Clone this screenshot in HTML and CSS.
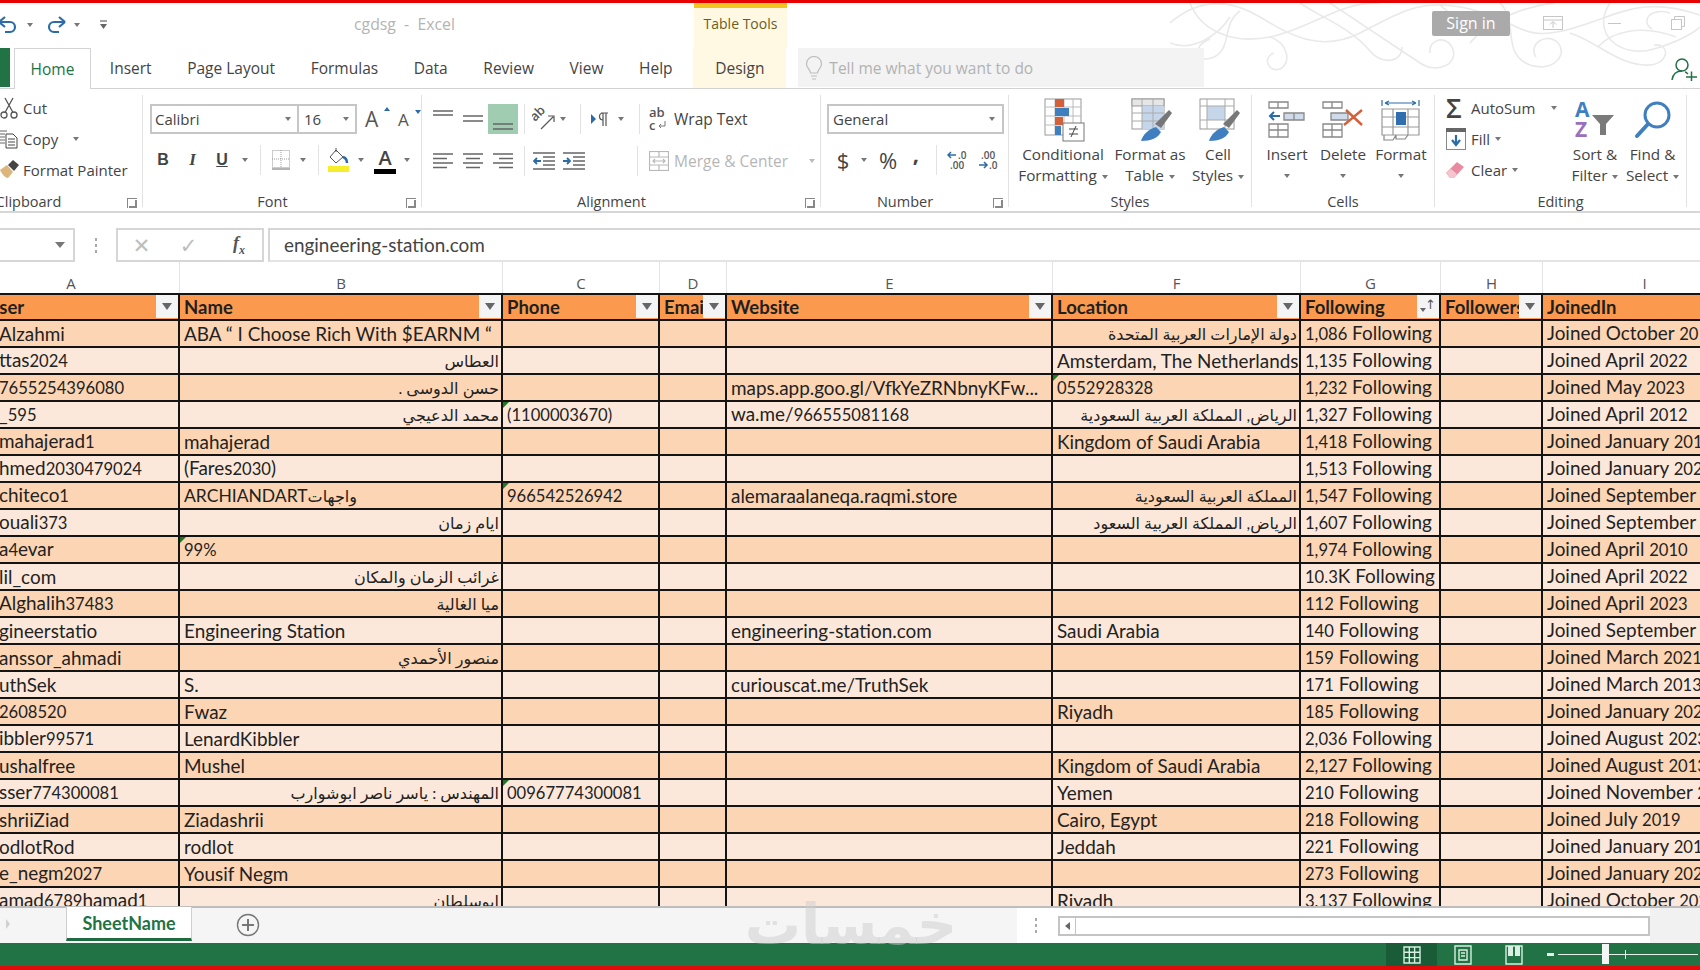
FILE: index.html
```html
<!DOCTYPE html>
<html lang="en">
<head>
<meta charset="utf-8">
<title>cgdsg - Excel</title>
<link rel="stylesheet" href="styles.css">
</head>
<body>
<div class="app">
  <div class="red-top"></div>

  <header class="titlebar">
    <svg class="swirl" width="530" height="72" viewBox="0 0 530 72" fill="none" stroke="#e9e9e9" stroke-width="1.6">
      <path d="M0 20C30 -6 60 -4 90 14S150 50 190 30S250 -6 300 6S350 40 400 26S470 -8 530 12"/>
      <path d="M20 0C30 26 60 42 100 34S170 -2 210 0M160 0C190 20 220 40 250 60C268 72 290 60 282 44C276 32 258 36 260 50"/>
      <path d="M40 36C20 44 26 62 44 54S52 20 70 8M330 0C350 20 330 50 360 62C384 70 400 50 386 38C374 30 358 42 366 54"/>
      <path d="M440 0C420 30 450 56 484 46S530 24 530 24M400 30C430 40 450 64 480 62C500 60 500 40 484 42M270 2C290 22 320 24 338 12"/>
      <path d="M100 34C118 40 122 60 110 66C98 70 92 54 104 50M500 10C480 4 470 18 482 26"/>
      <path d="M0 40C24 50 50 30 60 14M130 0C150 14 180 24 200 48C212 62 232 60 232 44M300 40C316 20 350 4 384 0M428 44C440 30 470 20 506 34"/>
    </svg>
    <div class="qat">
      <svg class="undo" width="20" height="18" viewBox="0 0 20 18" fill="none" stroke="#2b6ca8" stroke-width="2.2"><path d="M0 6L6 1M0 6L6 11M0 6H11A5 5 0 0 1 11 16H6"/></svg>
      <i class="caret"></i>
      <svg class="redo" width="20" height="18" viewBox="0 0 20 18" fill="none" stroke="#2b6ca8" stroke-width="2.2"><path d="M19 6L13 1M19 6L13 11M19 6H8A5 5 0 0 0 8 16H13"/></svg>
      <i class="caret"></i>
      <svg class="custom" width="9" height="11" viewBox="0 0 9 11"><path d="M1 2H8" stroke="#666" stroke-width="1.2"/><path d="M1 5H8L4.500 10Z" fill="#666"/></svg>
    </div>
    <div class="doc-title">cgdsg &nbsp;-&nbsp; Excel</div>
    <div class="ctx-title">Table Tools</div>
    <div class="win">
      <div class="signin">Sign in</div>
      <svg class="wbtn1" width="20" height="14" viewBox="0 0 20 14" fill="none" stroke="#c6c6c6"><rect x=".5" y=".5" width="19" height="13"/><path d="M.5 4H19.500M10 12V6M7 8.500L10 5.500L13 8.500"/></svg>
      <div class="wmin"></div>
      <svg class="wbtn3" width="14" height="14" viewBox="0 0 14 14" fill="none" stroke="#c6c6c6"><rect x=".5" y="3.500" width="10" height="10"/><path d="M3.500 3V.5H13.500V10.500H11"/></svg>
    </div>
  </header>

  <nav class="tabs">
    <div class="file-tab"></div>
    <div class="tab active">Home</div>
    <div class="tab">Insert</div>
    <div class="tab">Page Layout</div>
    <div class="tab">Formulas</div>
    <div class="tab">Data</div>
    <div class="tab">Review</div>
    <div class="tab">View</div>
    <div class="tab">Help</div>
    <div class="tab design">Design</div>
    <div class="tell">
      <svg width="18" height="24" viewBox="0 0 18 24" fill="none" stroke="#bdbdbd" stroke-width="1.200"><path d="M5.500 17C5 13 1.500 12 1.500 8A7.500 7.500 0 0 1 16.500 8C16.500 12 13 13 12.500 17ZM6 20H12M7 23H11"/></svg>
      <span>Tell me what you want to do</span>
    </div>
    <svg class="person" width="28" height="24" viewBox="0 0 28 24" fill="none" stroke="#217346" stroke-width="1.500"><circle cx="12" cy="8" r="6"/><path d="M2 23C3 16 7 14 12 14M15 15C16 15 17 16 18 17M16 20H27M21.500 14.500V24"/></svg>
  </nav>

  <section class="ribbon">
    <div class="group g-clip">
      <div class="stack">
        <div class="sitem"><svg width="20" height="22" viewBox="0 0 20 22" fill="none" stroke="#555" stroke-width="1.300"><circle cx="4" cy="18" r="3"/><circle cx="14" cy="18" r="3"/><path d="M5 15.500L13 1M13 15.500L5 1"/></svg><span>Cut</span></div>
        <div class="sitem"><svg width="20" height="20" viewBox="0 0 20 20" fill="none" stroke="#666"><path d="M0 2H7M0 5H5M0 8H5M0 11H5M0 14H5"/><path d="M6 5H13L17 9V19H6ZM8 10H15M8 13H15M8 16H15" stroke="#444"/></svg><span>Copy</span><i class="caret c-copy"></i></div>
        <div class="sitem"><svg width="20" height="20" viewBox="0 0 20 20"><path d="M0 10L7 5L13 12L8 18C5 18 2 14 0 10Z" fill="#dcb67a"/><path d="M8 5L13 0L19 5L14 11Z" fill="#444"/></svg><span>Format Painter</span></div>
      </div>
      <div class="glabel">Clipboard</div>
      <i class="launch"></i>
    </div>

    <div class="group g-font">
      <div class="frow1">
        <div class="sel s-name">Calibri<i class="caret"></i></div>
        <div class="sel s-size">16<i class="caret"></i></div>
        <span class="bigA">A<b class="up"></b></span>
        <span class="smA">A<b class="dn"></b></span>
      </div>
      <div class="frow2">
        <b class="fm">B</b><em class="fm i">I</em><u class="fm">U</u><i class="caret"></i><i class="vsep"></i>
        <svg width="18" height="20" viewBox="0 0 18 20" fill="none" stroke="#999" stroke-dasharray="1 1"><rect x=".5" y=".5" width="17" height="17"/><path d="M9 0V18M0 9H18"/><path d="M0 19H18" stroke-dasharray="none" stroke="#666"/></svg>
        <i class="caret"></i><i class="vsep"></i>
        <svg width="24" height="24" viewBox="0 0 24 24"><rect x="1" y="18" width="21" height="6" fill="#f6ee2a"/><path d="M9 2L3 9L9 15L16 9Z" fill="#fff" stroke="#555"/><path d="M9 0V4" stroke="#555"/><path d="M16 9C19 10 20 13 20 15" stroke="#2b6ca8" stroke-width="2.500" fill="none"/></svg>
        <i class="caret"></i>
        <span class="fontcolor">A</span>
        <i class="caret"></i>
      </div>
      <div class="glabel lab-shift">Font</div>
      <i class="launch"></i>
    </div>

    <div class="group g-align">
      <div class="arow1">
        <svg width="20" height="12" class="al-top" viewBox="0 0 20 12" stroke="#666" stroke-width="1.300"><path d="M0 1H20M0 5H20"/></svg>
        <svg width="20" height="12" viewBox="0 0 20 12" stroke="#666" stroke-width="1.300"><path d="M0 3H20M0 8H20"/></svg>
        <div class="al-active"><svg width="20" height="12" viewBox="0 0 20 12" stroke="#666" stroke-width="1.300"><path d="M0 5H20M0 10H20"/></svg></div>
        <i class="vsep"></i>
        <svg width="24" height="24" viewBox="0 0 24 24"><text transform="translate(3 15) rotate(-45)" class="svgtxt">ab</text><path d="M9 22L21 10M16 9H22V15" stroke="#555" fill="none" stroke-width="1.200"/></svg>
        <i class="caret"></i><i class="vsep"></i>
        <svg width="18" height="14" viewBox="0 0 18 14"><path d="M0 2L5 7L0 12Z" fill="#2b6ca8"/><path d="M12 1A3.500 3.500 0 0 0 12 8M12 1V14M15 1V14M10 1H17" stroke="#555" fill="none" stroke-width="1.200"/></svg>
        <i class="caret"></i><i class="vsep"></i>
        <svg width="20" height="26" viewBox="0 0 20 26"><text x="0" y="11" class="svgtxt">ab</text><text x="0" y="24" class="svgtxt">c</text><path d="M16 15V20H10M12 18L10 20L12 22" stroke="#777" fill="none"/></svg>
        <span class="wt">Wrap Text</span>
      </div>
      <div class="arow2">
        <svg width="20" height="16" viewBox="0 0 20 16" stroke="#666" stroke-width="1.300"><path d="M0 1H20M0 5.500H14M0 10H20M0 14.500H14"/></svg>
        <svg width="20" height="16" viewBox="0 0 20 16" stroke="#666" stroke-width="1.300"><path d="M0 1H20M3 5.500H17M0 10H20M3 14.500H17"/></svg>
        <svg width="20" height="16" viewBox="0 0 20 16" stroke="#666" stroke-width="1.300"><path d="M0 1H20M6 5.500H20M0 10H20M6 14.500H20"/></svg>
        <i class="vsep"></i>
        <svg width="22" height="18" viewBox="0 0 22 18" fill="none" stroke="#666" stroke-width="1.300"><path d="M0 1H22M10 5H22M10 9H22M10 13H22M0 17H22"/><path d="M8 9H1M4 6L1 9L4 12" stroke="#2b6ca8" stroke-width="1.800"/></svg>
        <svg width="22" height="18" viewBox="0 0 22 18" fill="none" stroke="#666" stroke-width="1.300"><path d="M0 1H22M10 5H22M10 9H22M10 13H22M0 17H22"/><path d="M0 9H7M4 6L7 9L4 12" stroke="#2b6ca8" stroke-width="1.800"/></svg>
        <i class="vsep end"></i>
        <svg width="20" height="20" viewBox="0 0 20 20" fill="none" stroke="#b8b8b8" stroke-width="1.200"><rect x=".5" y=".5" width="19" height="19"/><path d="M0 6H20M0 14H20M10 0V6M10 14V20M4 10H16M6 8L4 10L6 12M14 8L16 10L14 12"/></svg>
        <span class="wt off">Merge &amp; Center</span>
        <i class="caret c-merge"></i>
      </div>
      <div class="glabel lab-shift">Alignment</div>
      <i class="launch"></i>
    </div>

    <div class="group g-num">
      <div class="sel s-gen">General<i class="caret"></i></div>
      <div class="nrow2">
        <span class="nm">$</span><i class="caret"></i><span class="nm">%</span><span class="nm comma">,</span><i class="vsep"></i>
        <svg width="22" height="22" viewBox="0 0 22 22"><path d="M9 6H1M4 3L1 6L4 9" stroke="#2b6ca8" fill="none" stroke-width="1.500"/><text x="11" y="10" class="svgsm">.0</text><text x="3" y="20" class="svgsm">.00</text></svg>
        <svg width="22" height="22" viewBox="0 0 22 22"><text x="3" y="10" class="svgsm">.00</text><path d="M1 16H9M6 13L9 16L6 19" stroke="#2b6ca8" fill="none" stroke-width="1.500"/><text x="11" y="20" class="svgsm">.0</text></svg>
      </div>
      <div class="glabel lab-shift">Number</div>
      <i class="launch"></i>
    </div>

    <div class="group g-styles">
      <div class="bigs">
        <div class="big b-cond">
          <svg class="bicon" width="42" height="44" viewBox="0 0 42 44"><rect x="1" y="1" width="36" height="36" fill="#fff" stroke="#999"/><path d="M1 9H37M1 18H37M1 27H37M11 1V37M20 1V37M29 1V37" stroke="#bbb" fill="none"/><rect x="11" y="1" width="9" height="8" fill="#d4603a"/><rect x="11" y="10" width="14" height="8" fill="#3f7fbf"/><rect x="11" y="19" width="8" height="8" fill="#d4603a"/><rect x="11" y="28" width="6" height="9" fill="#3f7fbf"/><rect x="19" y="25" width="21" height="18" fill="#fff" stroke="#777"/><path d="M25 31H34M25 36H34M32 28L27 39" stroke="#444" fill="none"/></svg>
          <span>Conditional</span><span>Formatting<i class="caret"></i></span>
        </div>
        <div class="big b-fat">
          <svg class="bicon" width="42" height="44" viewBox="0 0 42 44"><rect x="1" y="1" width="32" height="30" fill="#fff" stroke="#999"/><rect x="1" y="1" width="32" height="7" fill="#e6e6e6" stroke="#999"/><rect x="11" y="8" width="22" height="23" fill="#c6d6ea"/><path d="M1 15H33M1 23H33M11 1V31M22 1V31" stroke="#aaa" fill="none"/><path d="M24 26L38 12L41 15L30 30Z" fill="#777"/><path d="M10 43C12 36 18 31 25 29L30 34C27 40 20 43 10 43Z" fill="#3f7fbf"/></svg>
          <span>Format as</span><span>Table<i class="caret"></i></span>
        </div>
        <div class="big b-cell">
          <svg class="bicon" width="42" height="44" viewBox="0 0 42 44"><rect x="1" y="1" width="34" height="30" fill="#fff" stroke="#999"/><rect x="8" y="8" width="18" height="14" fill="#c6d6ea"/><path d="M1 8H35M1 22H35M8 1V31M26 1V31" stroke="#aaa" fill="none"/><path d="M24 26L38 12L41 15L30 30Z" fill="#777"/><path d="M10 43C12 36 18 31 25 29L30 34C27 40 20 43 10 43Z" fill="#3f7fbf"/></svg>
          <span>Cell</span><span>Styles<i class="caret"></i></span>
        </div>
      </div>
      <div class="glabel">Styles</div>
    </div>

    <div class="group g-cells">
      <div class="bigs">
        <div class="big b-ins">
          <svg class="bicon" width="38" height="38" viewBox="0 0 38 38" fill="none" stroke="#888" stroke-width="1.300"><path d="M1 1H20V7H1ZM10 1V7M1 23H20V36H1ZM1 29H20M10 23V36"/><path d="M16 12H36V19H16ZM26 12V19" fill="#cfdbea"/><path d="M12 15H2M6 11L2 15L6 19" stroke="#2b6ca8" stroke-width="2"/></svg>
          <span>Insert</span><i class="caret"></i>
        </div>
        <div class="big b-del">
          <svg class="bicon" width="42" height="38" viewBox="0 0 42 38" fill="none" stroke="#888" stroke-width="1.300"><path d="M1 1H20V7H1ZM10 1V7M1 23H20V36H1ZM1 29H20M10 23V36"/><path d="M9 12H26V19H9Z" fill="#cfdbea"/><path d="M22 24L40 9M24 9L40 24" stroke="#d4603a" stroke-width="2.400"/></svg>
          <span>Delete</span><i class="caret"></i>
        </div>
        <div class="big b-fmt">
          <svg class="bicon" width="40" height="42" viewBox="0 0 40 42" fill="none" stroke="#999" stroke-width="1.200"><path d="M1 1V7M38 1V7M4 4H35M4 4L8 2M4 4L8 6M35 4L31 2M35 4L31 6" stroke="#2b6ca8"/><path d="M1 10H38V36H1ZM1 18H38M1 28H38M12 10V36M27 10V36"/><rect x="15" y="13" width="10" height="13" fill="#2f6fb0" stroke="none"/><path d="M3 36V41H12L15 36M15 36V40H24L27 36" stroke="#888"/></svg>
          <span>Format</span><i class="caret"></i>
        </div>
      </div>
      <div class="glabel">Cells</div>
    </div>

    <div class="group g-edit">
      <div class="bigs">
        <div class="stack s-edit">
          <div class="sitem"><span class="sigma">Σ</span><span>AutoSum</span><i class="caret c-auto"></i></div>
          <div class="sitem"><svg width="20" height="22" viewBox="0 0 20 22"><rect x=".5" y=".5" width="19" height="21" fill="#fff" stroke="#888"/><rect x="0" y="0" width="20" height="4" fill="#666"/><path d="M10 7V16M6 12L10 17L14 12" stroke="#2b6ca8" stroke-width="2.200" fill="none"/></svg><span>Fill</span><i class="caret"></i></div>
          <div class="sitem"><svg width="20" height="18" viewBox="0 0 20 18"><path d="M0 12L11 1L18 6L8 17H4Z" fill="#e88ba0"/><path d="M0 12L5 8L11 13L8 17H4Z" fill="#f4c5cf"/></svg><span>Clear</span><i class="caret"></i></div>
        </div>
        <div class="big b-sort">
          <svg class="bicon" width="42" height="38" viewBox="0 0 42 38"><text x="1" y="16" class="svgaz azb">A</text><text x="1" y="36" class="svgaz azp">Z</text><path d="M18 14H40L32 23V34H26V23Z" fill="#7a7a7a"/></svg>
          <span>Sort &amp;</span><span>Filter<i class="caret"></i></span>
        </div>
        <div class="big b-find">
          <svg class="bicon" width="38" height="38" viewBox="0 0 38 38" fill="none" stroke="#3f7fbf"><circle cx="23" cy="14" r="12" stroke-width="3"/><path d="M14 23L3 35" stroke-width="4" stroke-linecap="round"/></svg>
          <span>Find &amp;</span><span>Select<i class="caret"></i></span>
        </div>
      </div>
      <div class="glabel">Editing</div>
    </div>
  </section>

  <section class="fbar">
    <div class="namebox"><i class="caret big-caret"></i></div>
    <div class="dots"><i></i><i></i><i></i></div>
    <div class="fxbox">
      <span class="fx-x">✕</span><span class="fx-c">✓</span><span class="fx-f">f<sub>x</sub></span>
    </div>
    <div class="formula">engineering-station.com</div>
  </section>

  <div class="colheads">
    <span>A</span><span>B</span><span>C</span><span>D</span><span>E</span><span>F</span><span>G</span><span>H</span><span>I</span>
  </div>

  <main class="sheet">
    <table class="grid">
      <colgroup><col class="ca"><col class="cb"><col class="cc"><col class="cd"><col class="ce"><col class="cf"><col class="cg"><col class="ch"><col class="ci"></colgroup>
      <thead>
        <tr>
          <th class="first">User<i class="flt"></i></th>
          <th>Name<i class="flt"></i></th>
          <th>Phone<i class="flt"></i></th>
          <th>Email<i class="flt"></i></th>
          <th>Website<i class="flt"></i></th>
          <th>Location<i class="flt"></i></th>
          <th>Following<i class="flt sorted"></i></th>
          <th>Followers<i class="flt"></i></th>
          <th>JoinedIn</th>
        </tr>
      </thead>
      <tbody>
        <tr><td class="first">Alzahmi</td><td>ABA “ I Choose Rich With $EARNM “</td><td></td><td></td><td></td><td class="rtl">دولة الإمارات العربية المتحدة</td><td><span class="d">1,086</span> Following</td><td></td><td>Joined October <span class="d">2019</span></td></tr>
        <tr><td class="first">ttas<span class="d">2024</span></td><td class="rtl">العطاس</td><td></td><td></td><td></td><td>Amsterdam, The Netherlands</td><td><span class="d">1,135</span> Following</td><td></td><td>Joined April <span class="d">2022</span></td></tr>
        <tr><td class="first"><span class="d">7655254396080</span></td><td class="rtl">حسن الدوسى .</td><td></td><td></td><td>maps.app.goo.gl/VfkYeZRNbnyKFw...</td><td class="err"><span class="d">0552928328</span></td><td><span class="d">1,232</span> Following</td><td></td><td>Joined May <span class="d">2023</span></td></tr>
        <tr><td class="first">_<span class="d">595</span></td><td class="rtl">محمد الدعيجي</td><td class="err"><span class="d">(1100003670)</span></td><td></td><td>wa.me/<span class="d">966555081168</span></td><td class="rtl">الرياض, المملكة العربية السعودية</td><td><span class="d">1,327</span> Following</td><td></td><td>Joined April <span class="d">2012</span></td></tr>
        <tr><td class="first">mahajerad<span class="d">1</span></td><td>mahajerad</td><td></td><td></td><td></td><td>Kingdom of Saudi Arabia</td><td><span class="d">1,418</span> Following</td><td></td><td>Joined January <span class="d">2019</span></td></tr>
        <tr><td class="first">hmed<span class="d">2030479024</span></td><td>(Fares<span class="d">2030</span>)</td><td></td><td></td><td></td><td></td><td><span class="d">1,513</span> Following</td><td></td><td>Joined January <span class="d">2022</span></td></tr>
        <tr><td class="first">chiteco<span class="d">1</span></td><td><span class="caps">ARCHIANDART</span><span class="ar">واجهات</span></td><td class="err"><span class="d">966542526942</span></td><td></td><td>alemaraalaneqa.raqmi.store</td><td class="rtl">المملكة العربية السعودية</td><td><span class="d">1,547</span> Following</td><td></td><td>Joined September <span class="d">2019</span></td></tr>
        <tr><td class="first">ouali<span class="d">373</span></td><td class="rtl">ايام زمان</td><td></td><td></td><td></td><td class="rtl">الرياض, المملكة العربية السعود</td><td><span class="d">1,607</span> Following</td><td></td><td>Joined September <span class="d">2019</span></td></tr>
        <tr><td class="first err">a<span class="d">4</span>evar</td><td class="err"><span class="d">99%</span></td><td></td><td></td><td></td><td></td><td><span class="d">1,974</span> Following</td><td></td><td>Joined April <span class="d">2010</span></td></tr>
        <tr><td class="first">lil_com</td><td class="rtl">غرائب الزمان والمكان</td><td></td><td></td><td></td><td></td><td><span class="d">10.3</span>K Following</td><td></td><td>Joined April <span class="d">2022</span></td></tr>
        <tr><td class="first">Alghalih<span class="d">37483</span></td><td class="rtl">ميا الغالية</td><td></td><td></td><td></td><td></td><td><span class="d">112</span> Following</td><td></td><td>Joined April <span class="d">2023</span></td></tr>
        <tr><td class="first">gineerstatio</td><td>Engineering Station</td><td></td><td></td><td>engineering-station.com</td><td>Saudi Arabia</td><td><span class="d">140</span> Following</td><td></td><td>Joined September <span class="d">2019</span></td></tr>
        <tr><td class="first">anssor_ahmadi</td><td class="rtl">منصور الأحمدي</td><td></td><td></td><td></td><td></td><td><span class="d">159</span> Following</td><td></td><td>Joined March <span class="d">2021</span></td></tr>
        <tr><td class="first">uthSek</td><td>S.</td><td></td><td></td><td>curiouscat.me/TruthSek</td><td></td><td><span class="d">171</span> Following</td><td></td><td>Joined March <span class="d">2013</span></td></tr>
        <tr><td class="first"><span class="d">2608520</span></td><td>Fwaz</td><td></td><td></td><td></td><td>Riyadh</td><td><span class="d">185</span> Following</td><td></td><td>Joined January <span class="d">2021</span></td></tr>
        <tr><td class="first">ibbler<span class="d">99571</span></td><td>LenardKibbler</td><td></td><td></td><td></td><td></td><td><span class="d">2,036</span> Following</td><td></td><td>Joined August <span class="d">2023</span></td></tr>
        <tr><td class="first">ushalfree</td><td>Mushel</td><td></td><td></td><td></td><td>Kingdom of Saudi Arabia</td><td><span class="d">2,127</span> Following</td><td></td><td>Joined August <span class="d">2013</span></td></tr>
        <tr><td class="first">sser<span class="d">774300081</span></td><td class="rtl">المهندس : ياسر ناصر ابوشوارب</td><td class="err"><span class="d">00967774300081</span></td><td></td><td></td><td>Yemen</td><td><span class="d">210</span> Following</td><td></td><td>Joined November <span class="d">2019</span></td></tr>
        <tr><td class="first">shriiZiad</td><td>Ziadashrii</td><td></td><td></td><td></td><td>Cairo, Egypt</td><td><span class="d">218</span> Following</td><td></td><td>Joined July <span class="d">2019</span></td></tr>
        <tr><td class="first">odlotRod</td><td>rodlot</td><td></td><td></td><td></td><td>Jeddah</td><td><span class="d">221</span> Following</td><td></td><td>Joined January <span class="d">2019</span></td></tr>
        <tr><td class="first">e_negm<span class="d">2027</span></td><td>Yousif Negm</td><td></td><td></td><td></td><td></td><td><span class="d">273</span> Following</td><td></td><td>Joined January <span class="d">2022</span></td></tr>
        <tr><td class="first">amad<span class="d">6789</span>hamad<span class="d">1</span></td><td class="rtl">ابوسلطان</td><td></td><td></td><td></td><td>Riyadh</td><td><span class="d">3,137</span> Following</td><td></td><td>Joined October <span class="d">2022</span></td></tr>
      </tbody>
    </table>
  </main>

  <div class="strip">
    <svg class="prev" width="6" height="12" viewBox="0 0 6 12"><path d="M1 1L5 6L1 11Z" fill="#d0d0d0"/></svg>
    <div class="sheet-tab">SheetName</div>
    <svg class="add" width="24" height="24" viewBox="0 0 24 24" fill="none" stroke="#777" stroke-width="1.400"><circle cx="12" cy="12" r="10.500"/><path d="M12 6V18M6 12H18" stroke-width="2"/></svg>
    <div class="hs">
      <div class="dots"><i></i><i></i><i></i></div>
      <div class="hs-left"><b></b></div>
      <div class="hs-thumb"></div>
    </div>
  </div>

  <footer class="status">
    <div class="view on"><svg width="18" height="18" viewBox="0 0 18 18" fill="none" stroke="#d8efe2" stroke-width="1.400"><path d="M1 1H17V17H1ZM1 6.300H17M1 11.600H17M6.300 1V17M11.600 1V17"/></svg></div>
    <div class="view"><svg width="18" height="20" viewBox="0 0 18 20" fill="none" stroke="#d8efe2" stroke-width="1.400"><path d="M1 1H17V19H1ZM5 5H13V15H5ZM7 8H11M7 11H11"/></svg></div>
    <div class="view"><svg width="18" height="20" viewBox="0 0 18 20"><path d="M1 1H17V19H1Z" fill="none" stroke="#d8efe2" stroke-width="1.400"/><path d="M3 1H8V11H3ZM10 1H15V11H10Z" fill="#d8efe2"/></svg></div>
    <div class="zoom">
      <i class="zminus"></i>
      <div class="ztrack"><i class="zthumb"></i><i class="ztick"></i></div>
    </div>
  </footer>
  <div class="red-bottom"></div>
  <div class="watermark">خمسات</div>
</div>
</body>
</html>
```

FILE: styles.css
```css
* { box-sizing: border-box; }
html, body { margin: 0; padding: 0; }
body {
  width: 1700px; height: 970px; overflow: hidden; background: #fff;
  font-family: "Open Sans", "Noto Sans", "DejaVu Sans", sans-serif;
  color: #444; font-size: 15px;
}
i { font-style: normal; display: block; }
.app { position: relative; display: flex; flex-direction: column; width: 1700px; height: 970px; overflow: hidden; }
.red-top { height: 3px; background: #e60000; flex: none; }
.red-bottom { height: 4px; background: #e00a0a; flex: none; }

.caret { width: 0; height: 0; border: 3.5px solid transparent; border-top: 4px solid #777; border-bottom: 0; flex: none; }

/* title bar */
.titlebar { position: relative; height: 45px; flex: none; display: flex; align-items: center; background: #fff; }
.swirl { position: absolute; right: 0; top: 0; }
.qat { width: 354px; display: flex; align-items: center; margin-top: -2px; }
.qat .undo { margin-left: -1px; }
.qat .caret { margin-left: 8px; }
.qat .redo { margin-left: 13px; }
.qat .custom { margin-left: 19px; }
.doc-title { width: 340px; font-size: 15.800px; color: #b4b4b4; margin-top: -4px; }
.ctx-title { width: 93px; height: 45px; background: #fff8e2; border-top: 5px solid #f4c51e; color: #6d5c1f; font-size: 14px; text-align: center; line-height: 32px; flex: none; }
.win { position: relative; margin-left: auto; display: flex; align-items: center; }
.signin { width: 78px; height: 25px; background: #aaaaaa; color: #fff; font-size: 16px; line-height: 24px; text-align: center; border-radius: 2px; margin-top: -4px; margin-right: -2px; }
.wbtn1 { margin-left: 35px; margin-top: -6px; }
.wmin { width: 13px; height: 1px; background: #c6c6c6; margin-left: 45px; margin-top: -4px; }
.wbtn3 { margin-left: 50px; margin-right: 15px; margin-top: -6px; }

/* tabs */
.tabs { height: 40px; flex: none; display: flex; align-items: stretch; position: relative; }
.file-tab { width: 10px; height: 39px; background: #217346; margin-right: 4px; }
.tab { padding: 0 17.800px; line-height: 40px; font-size: 15.500px; color: #444; flex: none; }
.tab.active { width: 77px; padding: 0; text-align: center; color: #217346; background: #fff; border: 1px solid #d4d4d4; border-bottom: 0; margin-right: 1px; z-index: 2; height: 41px; }
.tab.design { margin-left: 3px; padding: 0; width: 93px; text-align: center; background: #fff8e2; }
.tell { margin-left: 12px; width: 406px; background: #f3f3f3; display: flex; align-items: center; padding-left: 7px; gap: 6px; color: #b2b2b2; font-size: 15.500px; height: 39px; }
.person { position: absolute; right: 2px; top: 9px; }

/* ribbon */
.ribbon { height: 125px; flex: none; display: flex; align-items: flex-start; border-top: 1px solid #d2d2d2; border-bottom: 2px solid #d6d6d6; }
.group { position: relative; height: 112px; margin-top: 6px; border-right: 1px solid #e2e2e2; display: flex; flex-direction: column; flex: none; }
.glabel { position: absolute; left: 0; right: 0; bottom: -4px; text-align: center; font-size: 14.500px; line-height: 18px; color: #444; }
.lab-shift { padding-right: 19px; }
.launch { position: absolute; right: 5px; bottom: -1px; width: 10px; height: 10px; border-left: 1px solid #888; border-top: 1px solid #888; }
.launch::after { content: ""; position: absolute; right: 0; bottom: 0; width: 6px; height: 6px; border-right: 2px solid #888; border-bottom: 2px solid #888; }
.stack { display: flex; flex-direction: column; gap: 5px; }
.sitem { height: 26px; display: flex; align-items: center; gap: 3px; font-size: 15px; color: #444; white-space: nowrap; }

.g-clip { width: 228px; margin-left: -85px; padding-left: 85px; }
.c-copy { margin-left: 12px; }

.g-font { width: 279px; padding: 9px 0 0 7px; }
.frow1 { display: flex; align-items: center; height: 30px; }
.sel { height: 30px; border: 2px solid #c6c6c6; display: flex; align-items: center; justify-content: space-between; padding: 0 6px 0 3px; font-size: 15px; background: #fff; }
.s-name { width: 149px; }
.s-size { width: 58px; border-left: 0; padding-left: 5px; }
.bigA { position: relative; font-size: 21px; margin-left: 8px; width: 27px; color: #555; }
.smA { position: relative; font-size: 17px; margin-left: 6px; width: 20px; color: #555; }
.up, .dn { position: absolute; top: 2px; right: 2px; width: 0; height: 0; border: 3.500px solid transparent; border-top: 0; border-bottom: 4px solid #2b6ca8; }
.dn { border-bottom: 0; border-top: 4px solid #2b6ca8; right: -3px; }
.frow2 { display: grid; grid-template-columns: 30px 29px 30px 16px 14px 28px 16px 14px 28px 16px 32px 12px; justify-items: center; align-items: center; height: 30px; margin: 11px 0 0 -2px; }
.fm { font-size: 17px; font-family: "Liberation Serif", serif; color: #444; }
.fm:first-child, u.fm { font-family: "Liberation Sans", sans-serif; font-size: 16px; font-weight: 700; }
.fm.i { font-family: "Liberation Serif", serif; font-weight: 700; font-style: italic; }
.vsep { width: 1px; height: 30px; background: #e2e2e2; }
.fontcolor { font-size: 20px; line-height: 22px; color: #444; font-weight: 600; border-bottom: 5px solid #000; width: 22px; text-align: center; }

.g-align { width: 399px; padding: 9px 0 0 5px; }
.arow1, .arow2 { display: grid; height: 30px; justify-items: center; align-items: center; }
.arow1 { grid-template-columns: 32px 27px 33px 11px 28px 10px 24px 16px 26px 10px 30px auto; }
.al-top { margin-top: -6px; }
.al-active { width: 30px; height: 30px; background: #a0cdb2; display: flex; align-items: flex-end; justify-content: center; padding-bottom: 3px; }
.arow2 { grid-template-columns: 32px 27px 33px 11px 28px 32px 54px 30px auto auto; margin-top: 12px; }
.vsep.end { justify-self: end; margin-right: 6px; }
.wt { font-size: 15.500px; color: #444; white-space: nowrap; justify-self: start; }
.wt.off { color: #b6b6b6; }
.c-merge { margin-left: 8px; border-top-color: #bbb; }
.svgtxt { font: 600 13px "Open Sans", sans-serif; fill: #555; }
.svgsm { font: 600 10px "Open Sans", sans-serif; fill: #555; }
.svgaz { font: 700 21px "Open Sans", sans-serif; }
.azb { fill: #3f7fbf; }
.azp { fill: #9a6fc0; }

.g-num { width: 188px; padding: 9px 0 0 6px; }
.s-gen { width: 177px; padding-left: 4px; padding-right: 7px; }
.nrow2 { display: grid; grid-template-columns: 32px 10px 38px 18px 23px 20px 42px; justify-items: center; align-items: center; height: 30px; margin-top: 11px; }
.nm { font-size: 22px; color: #444; line-height: 30px; }
.comma { font-weight: 700; margin-top: -14px; }

.bigs { display: flex; align-items: flex-start; }
.big { display: flex; flex-direction: column; align-items: center; flex: none; font-size: 15.300px; line-height: 21.500px; color: #444; white-space: nowrap; }
.big .bicon { height: 44px; margin: 3px 0 1.500px; }
.big > span .caret { display: inline-block; vertical-align: middle; margin-left: 5px; }
.big > .caret { margin-top: 9px; }

.g-styles { width: 243px; padding-left: 5px; }
.g-styles .bicon { margin-left: 4px; }
.b-cond { width: 98px; }
.b-fat { width: 76px; }
.b-cell { width: 60px; }

.g-cells { width: 183px; padding-left: 7px; }
.b-ins, .b-del { width: 56px; }
.b-fmt { width: 60px; }

.g-edit { width: 252px; padding-left: 11px; border-right: 1px solid #e2e2e2; }
.s-edit { width: 119px; }
.s-edit .sitem { gap: 5px; }
.sigma { font-size: 27px; line-height: 26px; width: 20px; color: #444; font-weight: 600; }
.c-auto { margin-left: 11px; }
.b-sort { width: 60px; }
.b-find { width: 55px; }

/* formula bar */
.fbar { height: 34px; margin-top: 15px; flex: none; display: flex; align-items: stretch; }
.namebox { width: 75px; border: 2px solid #d6d6d6; border-left: 0; display: flex; align-items: center; justify-content: flex-end; padding-right: 8px; }
.big-caret { border-width: 5px; border-top-width: 6px; border-bottom-width: 0; }
.fbar > .dots { width: 41px; }
.dots { display: flex; flex-direction: column; align-items: center; justify-content: center; gap: 3px; }
.dots i { width: 2px; height: 3px; background: #aaa; }
.fxbox { width: 148px; border: 2px solid #d6d6d6; display: grid; grid-template-columns: 47px 47px 54px; justify-items: center; align-items: center; color: #bdbdbd; font-size: 21px; }
.fx-f { color: #555; font: italic 700 18px "Liberation Serif", serif; }
.fx-f sub { font-size: 12px; }
.formula { flex: 1; margin-left: 4px; border: 2px solid #d6d6d6; border-right: 0; border-bottom-color: #e4e4e4; font: 18.900px/30px Lato, "Open Sans", sans-serif; color: #444; padding-left: 14px; }

/* column heads */
.colheads { height: 31px; flex: none; margin-left: -37px; width: 1783px; display: grid; grid-template-columns: 217px 323px 157px 67px 326px 248px 140px 102px 204px; }
.colheads span { text-align: center; padding-top: 5px; line-height: 33px; font-size: 15px; color: #555; border-right: 1px solid #e3e3e3; overflow: hidden; }

/* sheet */
.sheet { flex: 1; overflow: hidden; min-height: 0; }
.grid { margin-left: -37px; width: 1783px; table-layout: fixed; border-collapse: separate; border-spacing: 0; font: 18.900px Lato, "DejaVu Sans", sans-serif; color: #222; }
.ca { width: 217px; } .cb { width: 323px; } .cc { width: 157px; } .cd { width: 67px; } .ce { width: 326px; }
.cf { width: 248px; } .cg { width: 140px; } .ch { width: 102px; } .ci { width: 204px; }
th, td { position: relative; padding: 0 2px 0 4px; border-right: 2px solid #141414; border-bottom: 2px solid #141414; white-space: nowrap; overflow: hidden; text-align: left; font-weight: 400; }
th { height: 28px; border-top: 2px solid #141414; background: #fb9a4e; font-weight: 700; color: #1f1f1f; font-size: 18.500px; line-height: 24px; }
td { height: 26.930px; line-height: 24px; }
tbody tr:nth-child(odd) td { background: #fcd5b4; }
tbody tr:nth-child(even) td { background: #fce8da; }
th.first { padding-left: 23px; }
td.first { padding-left: 36px; }
.d { font-size: 16.600px; }
.caps { font-size: 17.500px; }
.ar { font-size: 16px; }
td.rtl { direction: rtl; text-align: right; font-size: 16px; padding: 0 2px 0 0; }
td.err::before { content: ""; position: absolute; left: 0; top: 0; border-top: 6px solid #1f7a1f; border-right: 6px solid transparent; }
.flt { position: absolute; right: 0; top: 0; width: 22px; height: 23px; background: #f4f4f4; }
.flt::after { content: ""; position: absolute; left: 6px; top: 8px; border: 5px solid transparent; border-top: 7px solid #666; border-bottom: 0; }
.flt.sorted::after { left: 3px; top: 13px; border-width: 3px; border-top-width: 4px; border-bottom-width: 0; }
.flt.sorted::before { content: "↑"; position: absolute; right: 3px; top: 1px; font: 13px/18px "DejaVu Sans", sans-serif; color: #555; }

/* sheet tabs */
.strip { height: 37px; flex: none; display: flex; align-items: stretch; background: #f5f5f5; border-top: 2px solid #bdbdbd; position: relative; }
.prev { margin: 10px 0 0 5px; }
.sheet-tab { width: 126px; margin-left: 55px; height: 34px; margin-top: -1px; background: #fff; border: 1px solid #cfcfcf; border-top: 0; border-bottom: 3px solid #1f6b41; text-align: center; font: 700 18px/33px Lato, sans-serif; color: #217346; }
.add { margin: 5px 0 0 44px; }
.hs { margin-left: auto; width: 683px; display: flex; align-items: center; padding-left: 15px; background: linear-gradient(90deg, #fff 0, #fff 633px, #f1f1f1 633px); }
.hs .dots { width: 8px; margin-right: 18px; }
.hs-left { width: 18px; height: 20px; background: #fff; border: 2px solid #c4c4c4; border-right-width: 1px; display: flex; align-items: center; justify-content: center; }
.hs-left b { width: 0; height: 0; border: 4px solid transparent; border-right: 5px solid #666; border-left: 0; }
.hs-thumb { width: 574px; height: 20px; background: #fff; border: 2px solid #c4c4c4; border-left: 0; }

/* status */
.status { height: 23px; flex: none; background: #217346; display: flex; align-items: stretch; padding-left: 1386px; }
.view { width: 51px; display: flex; align-items: center; justify-content: center; }
.view.on { background: #1a5c38; }
.zoom { margin-left: 8px; display: flex; align-items: center; }
.zminus { width: 7px; height: 3px; background: #e6f1ea; }
.ztrack { position: relative; width: 140px; height: 1px; margin-left: 4px; background: #e6f1ea; }
.zthumb { position: absolute; left: 44px; top: -10px; width: 7px; height: 20px; background: #f2f7f4; }
.ztick { position: absolute; left: 67px; top: -4px; width: 1px; height: 9px; background: #e6f1ea; }

.watermark { position: absolute; left: 745px; top: 890px; width: 212px; text-align: center; font: 700 56px/70px "DejaVu Sans", sans-serif; color: rgba(205, 205, 205, .5); direction: rtl; pointer-events: none; white-space: nowrap; }
```
